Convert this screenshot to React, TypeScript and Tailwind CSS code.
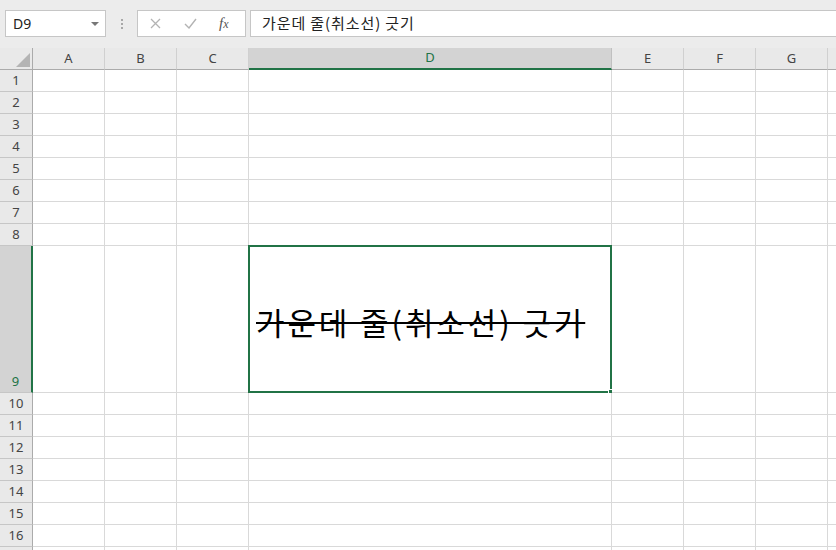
import React from 'react';

const COLS = [
  { key: 'A', w: 'w-[72px]' },
  { key: 'B', w: 'w-[72px]' },
  { key: 'C', w: 'w-[72px]' },
  { key: 'D', w: 'w-[363px]' },
  { key: 'E', w: 'w-[72px]' },
  { key: 'F', w: 'w-[72px]' },
  { key: 'G', w: 'w-[72px]' },
  { key: 'H', w: 'w-[72px]' },
];

const ROWS = Array.from({ length: 17 }, (_, i) => i + 1);
const ACTIVE_ROW = 9;
const ACTIVE_COL = 'D';
const CELL_TEXT = '가운데 줄(취소선) 긋기';

const uiFont = { fontFamily: '"Noto Sans", "Noto Sans CJK KR", sans-serif' };
const krFont = { fontFamily: '"Noto Sans CJK KR", "Noto Sans", sans-serif' };

function FormulaBar() {
  return (
    <div className="flex h-[48px] items-start bg-[#ececec] pt-[10px]" style={uiFont}>
      {/* 이름 상자 */}
      <div className="ml-[5px] flex h-[27px] w-[101px] items-center justify-between border border-[#c6c6c6] bg-white pl-[7px] pr-[6px]">
        <span className="text-[14px] text-[#222]">D9</span>
        <span className="h-0 w-0 border-x-[4px] border-t-[4px] border-x-transparent border-t-[#777]" />
      </div>

      <div className="flex h-[27px] w-[31px] items-center justify-center">
        <span className="flex flex-col gap-[2px]">
          <span className="h-[2px] w-[2px] bg-[#a8a8a8]" />
          <span className="h-[2px] w-[2px] bg-[#a8a8a8]" />
          <span className="h-[2px] w-[2px] bg-[#a8a8a8]" />
        </span>
      </div>

      {/* 취소 / 입력 / 함수 */}
      <div className="flex h-[27px] w-[109px] items-center border border-[#c6c6c6] bg-white">
        <svg className="ml-[12px]" width="11" height="11" viewBox="0 0 11 11">
          <path d="M1 1 L10 10 M10 1 L1 10" stroke="#b3b3b3" strokeWidth="1.3" fill="none" />
        </svg>
        <svg className="ml-[23px]" width="13" height="11" viewBox="0 0 13 11">
          <path d="M1 6 L5 10 L12 1" stroke="#b3b3b3" strokeWidth="1.4" fill="none" />
        </svg>
        <span
          className="ml-[22px] text-[15px] italic text-[#555]"
          style={{ fontFamily: '"Liberation Serif", serif' }}
        >
          f<span className="text-[12px]">x</span>
        </span>
      </div>

      <div className="ml-[4px] flex h-[27px] flex-1 items-center border border-r-0 border-[#c6c6c6] bg-white pl-[11px]">
        <span className="text-[15px] tracking-[0.9px] text-[#222]" style={krFont}>
          {CELL_TEXT}
        </span>
      </div>
    </div>
  );
}

function HeaderRow() {
  return (
    <div className="flex">
      <div className="flex h-[22px] w-[33px] shrink-0 items-end justify-end border-b border-r border-[#ababab] bg-[#e9e9e9] pb-[2px] pr-[2px]">
        <span className="h-0 w-0 border-b-[14px] border-l-[14px] border-b-[#b4b4b4] border-l-transparent" />
      </div>
      {COLS.map((c) => {
        const active = c.key === ACTIVE_COL;
        return (
          <div
            key={c.key}
            className={`flex h-[22px] shrink-0 items-center justify-center border-r text-[13px] ${c.w} ${
              active
                ? 'border-b-2 border-r-[#c0c0c0] border-b-[#217346] bg-[#d3d3d3] text-[#217346]'
                : 'border-b border-r-[#d0d0d0] border-b-[#ababab] bg-[#e9e9e9] text-[#444]'
            }`}
          >
            {c.key}
          </div>
        );
      })}
    </div>
  );
}

function SheetRow({ n }: { n: number }) {
  const active = n === ACTIVE_ROW;
  const h = active ? 'h-[147px]' : 'h-[22px]';
  return (
    <div className="flex">
      <div
        className={`flex w-[33px] shrink-0 justify-center border-b border-b-[#c6c6c6] text-[13px] ${h} ${
          active
            ? 'items-end border-r-2 border-r-[#217346] bg-[#d3d3d3] pb-[1px] text-[#217346]'
            : 'items-center border-r border-r-[#ababab] bg-[#e9e9e9] text-[#444]'
        }`}
      >
        {n}
      </div>
      {COLS.map((c) => {
        const isActive = active && c.key === ACTIVE_COL;
        return (
          <div
            key={c.key}
            className={`relative shrink-0 border-b border-r border-[#d9d9d9] bg-white ${c.w} ${h}`}
          >
            {isActive && (
              <>
                <div className="flex h-full items-center pl-[7px] pt-[4px]">
                  <span
                    className="whitespace-nowrap text-[31px] leading-none tracking-[2.9px] text-black line-through decoration-[2px]"
                    style={krFont}
                  >
                    {CELL_TEXT}
                  </span>
                </div>
                {/* 선택 테두리 */}
                <div className="pointer-events-none absolute -bottom-[1px] -left-[1px] -right-[1px] -top-[1px] border-2 border-[#217346]" />
                <div className="absolute -bottom-[4px] -right-[4px] h-[7px] w-[7px] border border-white bg-[#217346]" />
              </>
            )}
          </div>
        );
      })}
    </div>
  );
}

export default function App() {
  return (
    <div className="h-[550px] w-[836px] overflow-hidden bg-white" style={uiFont}>
      <FormulaBar />
      <div className="overflow-hidden">
        <HeaderRow />
        {ROWS.map((n) => (
          <SheetRow key={n} n={n} />
        ))}
      </div>
    </div>
  );
}
